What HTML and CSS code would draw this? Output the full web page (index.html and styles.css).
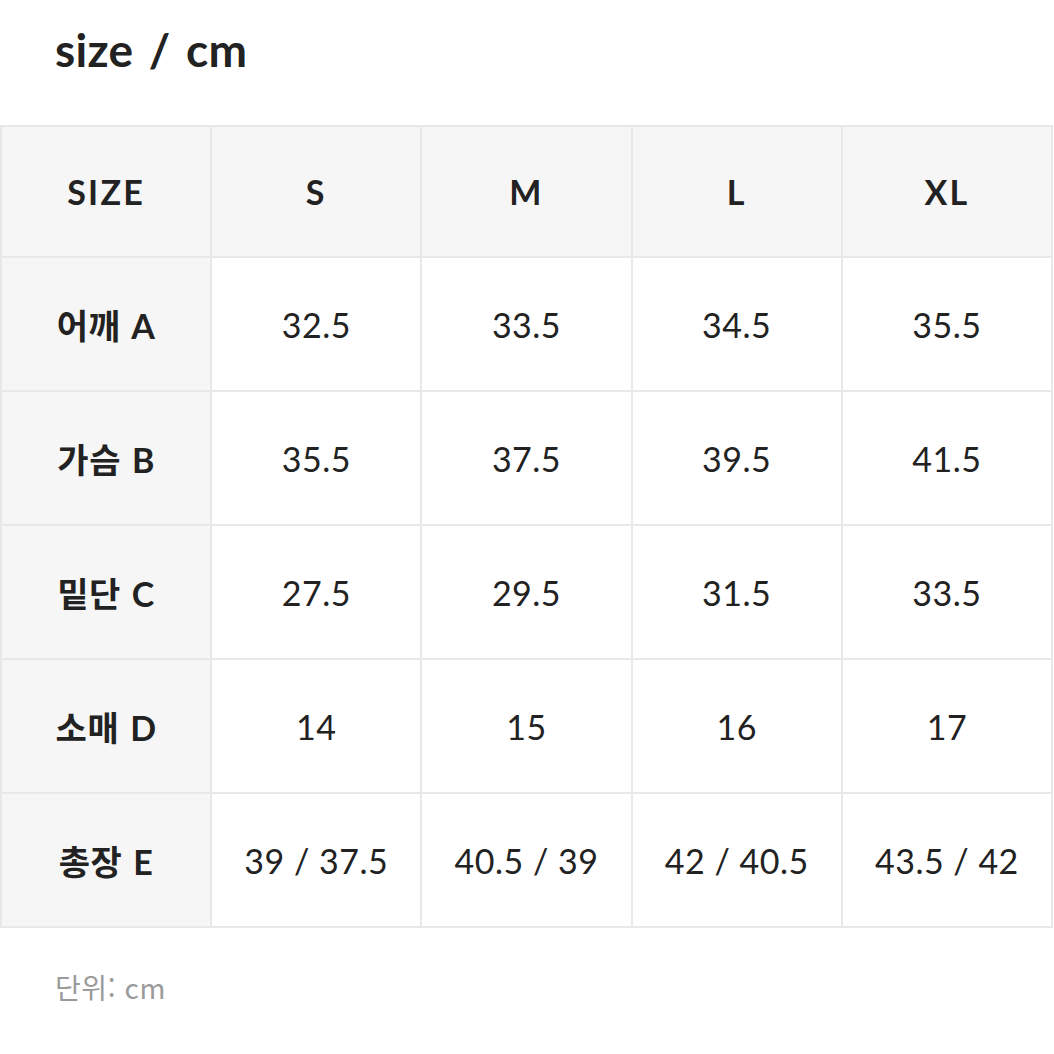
FILE: index.html
```html
<!DOCTYPE html>
<html lang="ko">
<head>
<meta charset="utf-8">
<title>size / cm</title>
<link rel="stylesheet" href="styles.css">
</head>
<body>
<h1 class="title">size / cm</h1>
<div class="grid">
  <div class="cell head">SIZE</div>
  <div class="cell head">S</div>
  <div class="cell head">M</div>
  <div class="cell head">L</div>
  <div class="cell head">XL</div>

  <div class="cell label">어깨 A</div>
  <div class="cell">32.5</div>
  <div class="cell">33.5</div>
  <div class="cell">34.5</div>
  <div class="cell">35.5</div>

  <div class="cell label">가슴 B</div>
  <div class="cell">35.5</div>
  <div class="cell">37.5</div>
  <div class="cell">39.5</div>
  <div class="cell">41.5</div>

  <div class="cell label">밑단 C</div>
  <div class="cell">27.5</div>
  <div class="cell">29.5</div>
  <div class="cell">31.5</div>
  <div class="cell">33.5</div>

  <div class="cell label">소매 D</div>
  <div class="cell">14</div>
  <div class="cell">15</div>
  <div class="cell">16</div>
  <div class="cell">17</div>

  <div class="cell label">총장 E</div>
  <div class="cell">39 / 37.5</div>
  <div class="cell">40.5 / 39</div>
  <div class="cell">42 / 40.5</div>
  <div class="cell">43.5 / 42</div>
</div>
<p class="unit">단위: cm</p>
</body>
</html>
```

FILE: styles.css
```css
html, body {
  margin: 0;
  padding: 0;
  background: #ffffff;
}

body {
  font-family: Lato, "Noto Sans CJK KR", sans-serif;
  color: #222222;
}

.title {
  margin: 22px 0 0 55px;
  font-size: 46px;
  font-weight: 700;
  line-height: normal;
  word-spacing: 4px;
  letter-spacing: 0.3px;
}

.grid {
  margin-top: 48px;
  width: 1053px;
  box-sizing: border-box;
  display: grid;
  grid-template-columns: repeat(5, 1fr);
  grid-template-rows: 129px repeat(5, 132px);
  gap: 2px;
  padding: 2px;
  background: #e8e8e8;
}

.cell {
  background: #ffffff;
  display: flex;
  align-items: center;
  justify-content: center;
  font-size: 34px;
  font-weight: 400;
  letter-spacing: 0.5px;
}

.head,
.label {
  background: #f6f6f6;
  font-weight: 700;
}

.head {
  letter-spacing: 2.2px;
}

.label {
  letter-spacing: 0.6px;
  word-spacing: 2px;
}

.unit {
  margin: 45px 0 0 55px;
  font-family: "Noto Sans CJK KR", sans-serif;
  font-size: 28px;
  line-height: 28px;
  letter-spacing: 0.6px;
  color: #9a9a9a;
}
```
